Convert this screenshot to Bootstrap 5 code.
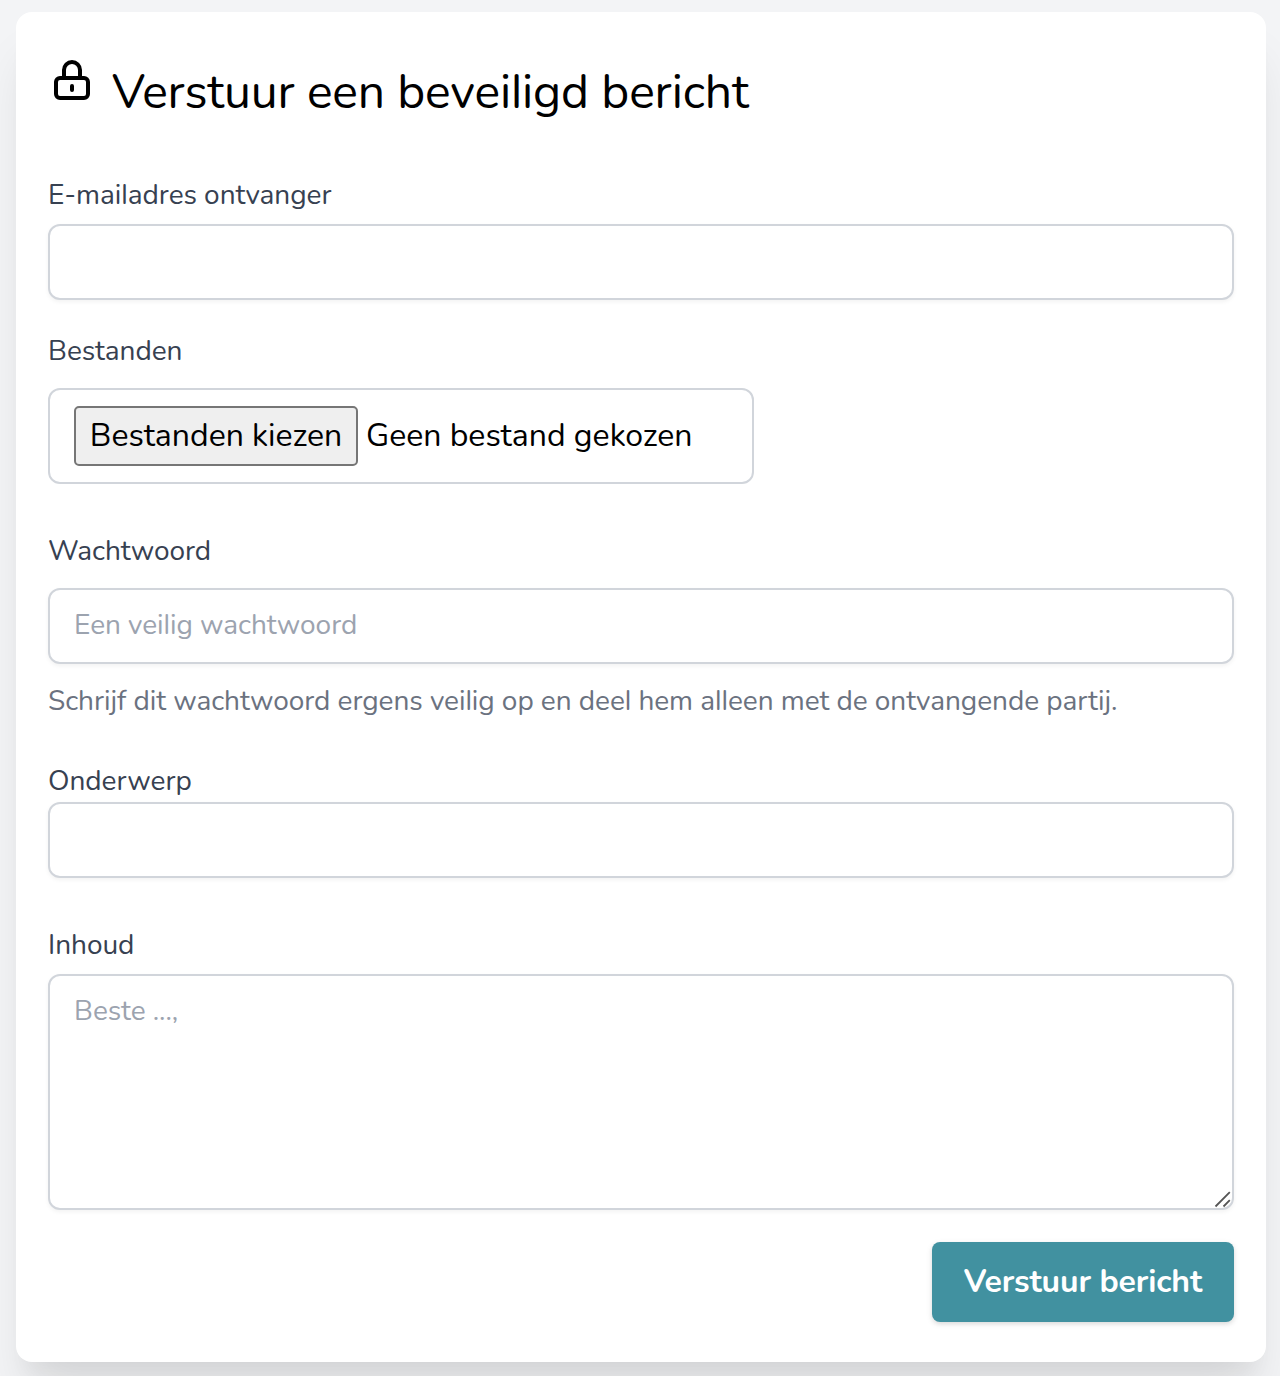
<!DOCTYPE html>
<html lang="nl">
<head>
<meta charset="utf-8">
<meta name="viewport" content="width=device-width, initial-scale=1">
<title>Verstuur een beveiligd bericht</title>
<link href="https://cdn.jsdelivr.net/npm/bootstrap@5.3.0/dist/css/bootstrap.min.css" rel="stylesheet">
<style>
body{background:#f3f4f6;font-family:Nunito,Lato,sans-serif;font-feature-settings:"ss02";color:#000;height:1376px;overflow:hidden}
input,textarea,button{font-feature-settings:inherit}
.panel{margin:12px 14px 0 16px;height:1350px;padding:44px 32px 40px;border:0;border-radius:16px;background:#fff;box-shadow:0 40px 50px -10px rgba(0,0,0,.1),0 20px 20px -10px rgba(0,0,0,.04)}
.panel-title{font-size:48px;line-height:72px;font-weight:400;letter-spacing:-.1px;margin:0 0 0 16px;color:#000}
.heading{height:119px}
.form-label{display:block;margin:0;font-size:28px;line-height:40px;letter-spacing:-.04px;color:#374151}
.form-control{font-size:28px;line-height:40px;letter-spacing:-.04px;height:76px;padding:15px 24px 17px;border:2px solid #d1d5db;border-radius:12px;box-shadow:0 2px 4px rgba(0,0,0,.05);color:#000}
.form-control::placeholder{color:#9ca3af;opacity:1}
.form-control:focus{border-color:#4191a0;box-shadow:0 0 0 4px rgba(65,145,160,.25)}
.field-mail{margin-bottom:31px}.field-mail .form-label{margin-bottom:9px}
.field-files{margin-bottom:47px}.field-files .form-label{margin-bottom:17px}
.field-pass{margin-bottom:40px}.field-pass .form-label{margin-bottom:17px}
.field-subject{margin-bottom:47px}.field-subject .form-label{margin-bottom:1px}
.field-body{margin-bottom:32px}.field-body .form-label{margin-bottom:9px}
.hint{margin-top:17px;font-size:28px;line-height:40px;letter-spacing:-.04px;color:#6b7280;white-space:nowrap}
.file-box{width:706px;height:96px;padding:0 24px;border:2px solid #d1d5db;border-radius:12px;font-size:32px;line-height:48px}
.file-pick{width:284px;height:60px;padding:0;border:2px solid #767676;border-radius:5px;background:#efefef;color:#000;white-space:nowrap}
.file-none{margin-left:8px;white-space:nowrap}
textarea.form-control{height:236px;resize:none;display:block}
.grip{right:2px;bottom:1px;pointer-events:none}
.send{width:302px;height:80px;padding:0;border:0;border-radius:8px;background:#4191a0;color:#fff;font-size:32px;line-height:48px;font-weight:700;letter-spacing:-.1px;white-space:nowrap;box-shadow:0 2px 6px rgba(0,0,0,.1),0 2px 4px rgba(0,0,0,.06)}
.send:hover{background:#377c89;color:#fff}
</style>
<script src="https://cdn.jsdelivr.net/npm/bootstrap@5.3.0/dist/js/bootstrap.bundle.min.js"></script>
</head>
<body>
<main class="card panel">
<header class="heading d-flex align-items-start">
<svg width="48" height="48" viewBox="0 0 24 24" fill="none" stroke="#000" stroke-width="2" stroke-linecap="round" stroke-linejoin="round" aria-hidden="true"><path d="M12 15v2m-6 4h12a2 2 0 002-2v-6a2 2 0 00-2-2H6a2 2 0 00-2 2v6a2 2 0 002 2zm10-10V7a4 4 0 00-8 0v4h8z"/></svg>
<h1 class="panel-title">Verstuur een beveiligd bericht</h1>
</header>
<form>
<div class="field-mail">
<label class="form-label" for="mail">E-mailadres ontvanger</label>
<input class="form-control" type="email" id="mail">
</div>
<div class="field-files">
<label class="form-label" for="pick">Bestanden</label>
<div class="file-box d-flex align-items-center">
<button class="file-pick" type="button" id="pick">Bestanden kiezen</button>
<span class="file-none">Geen bestand gekozen</span>
</div>
</div>
<div class="field-pass">
<label class="form-label" for="pass">Wachtwoord</label>
<input class="form-control" type="text" id="pass" placeholder="Een veilig wachtwoord">
<div class="hint">Schrijf dit wachtwoord ergens veilig op en deel hem alleen met de ontvangende partij.</div>
</div>
<div class="field-subject">
<label class="form-label" for="subject">Onderwerp</label>
<input class="form-control" type="text" id="subject">
</div>
<div class="field-body">
<label class="form-label" for="content">Inhoud</label>
<div class="position-relative">
<textarea class="form-control" id="content" placeholder="Beste ...,"></textarea>
<svg class="grip position-absolute" width="18" height="18" viewBox="0 0 18 18" fill="none" stroke="#555" stroke-width="1.8" aria-hidden="true"><path d="M1.500 15.500L15.800 1.200M9.500 15.500L15.800 9.200"/></svg>
</div>
</div>
<div class="d-flex justify-content-end">
<button class="btn send" type="button">Verstuur bericht</button>
</div>
</form>
</main>
</body>
</html>
